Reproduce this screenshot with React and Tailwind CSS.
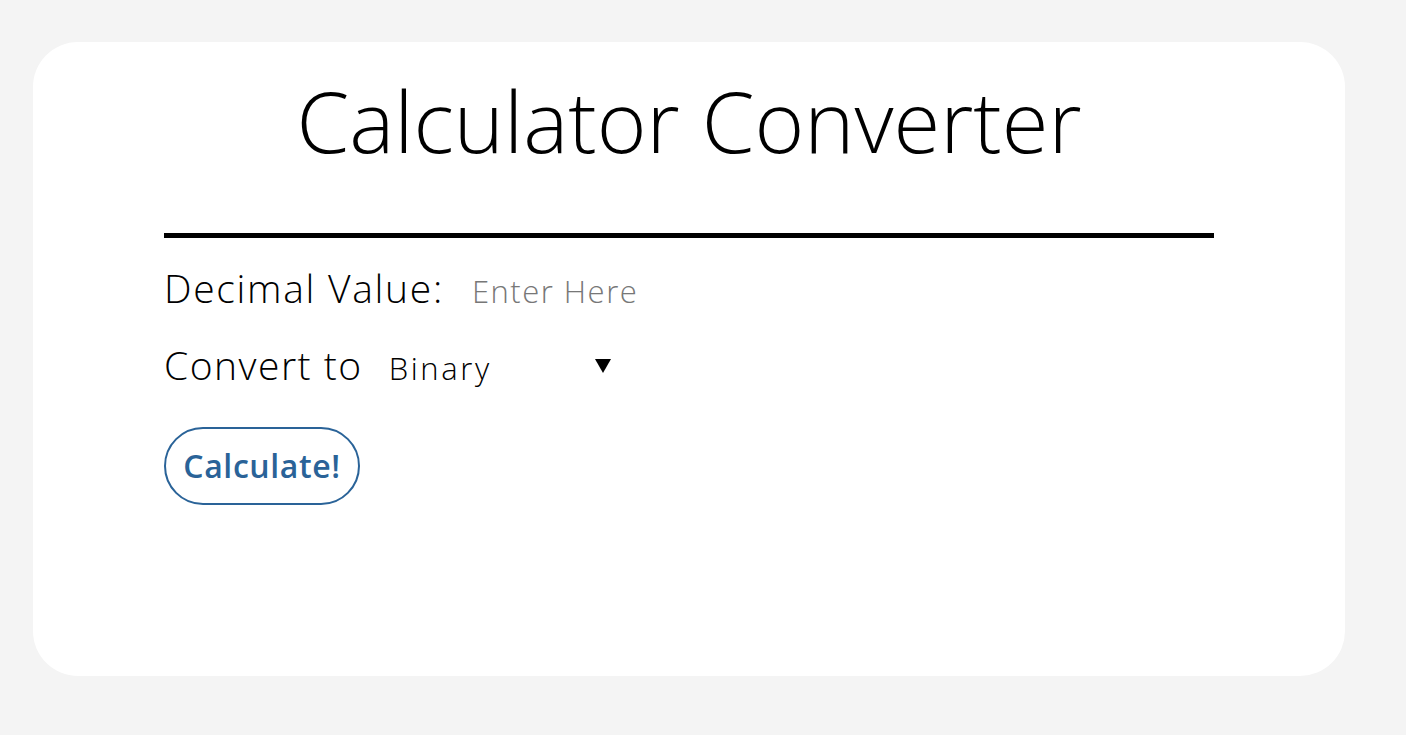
export default function App() {
  const font = { fontFamily: '"Open Sans", "Lato", sans-serif' };
  return (
    <div className="min-h-[735px] w-full bg-[#f4f4f4] pt-[42px] pl-[33px]" style={font}>
      <div className="w-[1312px] h-[634px] bg-white rounded-[45px] px-[131px]">
        <h1 className="text-center text-[85px] font-light leading-none text-black pt-[36px] h-[191px]">
          Calculator Converter
        </h1>
        <div className="h-[5px] bg-black" />
        <div className="mt-[30px] flex items-baseline">
          <span className="text-[39px] font-light tracking-[1.7px] text-black leading-none">Decimal Value:</span>
          <input
            className="ml-[28px] text-[31px] font-light tracking-[1.5px] text-black placeholder:text-[#777] outline-none w-[300px]"
            placeholder="Enter Here"
          />
        </div>
        <div className="mt-[30px] flex items-baseline">
          <span className="text-[39px] font-light tracking-[1.5px] text-black leading-none">Convert to</span>
          <div className="ml-[26px] w-[222px] flex items-center justify-between">
            <span className="text-[31px] font-light tracking-[2.6px] text-black leading-none">Binary</span>
            <svg width="16" height="14" viewBox="0 0 16 14" className="-mt-[4px]">
              <path d="M0 0 H16 L8 14 Z" fill="black" />
            </svg>
          </div>
        </div>
        <button className="mt-[43px] w-[196px] h-[78px] rounded-full border-2 border-[#2a6398] text-[#2a6398] text-[32px] font-semibold tracking-[0.6px]">
          Calculate!
        </button>
      </div>
    </div>
  );
}
